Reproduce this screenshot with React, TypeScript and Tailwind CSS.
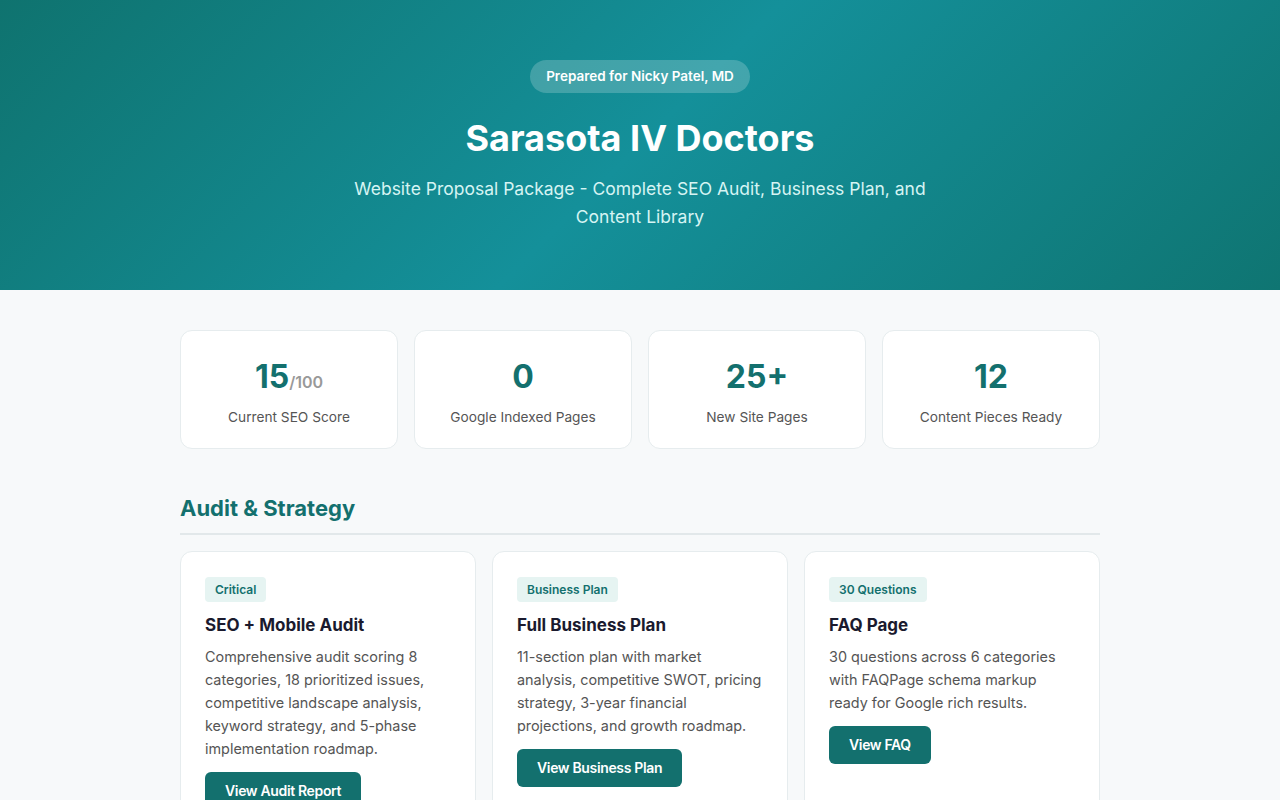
const stats = [
  { value: '15', suffix: '/100', label: 'Current SEO Score' },
  { value: '0', label: 'Google Indexed Pages' },
  { value: '25+', label: 'New Site Pages' },
  { value: '12', label: 'Content Pieces Ready' },
];

const cards = [
  {
    tag: 'Critical',
    title: 'SEO + Mobile Audit',
    body: 'Comprehensive audit scoring 8 categories, 18 prioritized issues, competitive landscape analysis, keyword strategy, and 5-phase implementation roadmap.',
    cta: 'View Audit Report',
  },
  {
    tag: 'Business Plan',
    title: 'Full Business Plan',
    body: '11-section plan with market analysis, competitive SWOT, pricing strategy, 3-year financial projections, and growth roadmap.',
    cta: 'View Business Plan',
  },
  {
    tag: '30 Questions',
    title: 'FAQ Page',
    body: '30 questions across 6 categories with FAQPage schema markup ready for Google rich results.',
    cta: 'View FAQ',
  },
];

export default function App() {
  return (
    <div className="min-h-screen bg-[#f7f9fa] font-['Inter',sans-serif]">
      {/* Hero */}
      <header className="h-[290px] bg-[linear-gradient(135deg,#0f736f_0%,#14909a_50%,#0f7572_100%)] px-6 pt-[60px] text-center">
        <span className="inline-block rounded-full bg-white/20 px-4 py-[8px] text-[13.5px] font-semibold leading-[17px] text-white">
          Prepared for Nicky Patel, MD
        </span>
        <h1 className="mt-[23px] text-[36px] font-bold leading-[44px] text-white">Sarasota IV Doctors</h1>
        <p className="mx-auto mt-[15px] max-w-[600px] text-[17.5px] leading-[28px] text-[#d6f4f3]">
          Website Proposal Package - Complete SEO Audit, Business Plan, and Content Library
        </p>
      </header>

      <main className="mx-auto w-[920px] pt-10">
        {/* Stats */}
        <div className="grid grid-cols-4 gap-4">
          {stats.map((s) => (
            <div
              key={s.label}
              className="rounded-xl border border-[#e6ecee] bg-white px-4 pt-[26px] pb-[21px] text-center"
            >
              <div className="h-10 text-[32px] font-bold leading-10 text-[#13706e]">
                {s.value}
                {s.suffix && <span className="text-[16px] font-semibold text-[#999999]">{s.suffix}</span>}
              </div>
              <div className="mt-[10px] text-[13.7px] leading-5 text-[#555555]">{s.label}</div>
            </div>
          ))}
        </div>

        {/* Audit & Strategy */}
        <h2 className="mt-[44px] border-b-2 border-[#e2e8ea] pb-[10px] text-[22px] font-bold leading-[30px] text-[#13706e]">
          Audit &amp; Strategy
        </h2>
        <div className="mt-4 grid grid-cols-3 gap-4">
          {cards.map((c) => (
            <div key={c.title} className="rounded-xl border border-[#e6ecee] bg-white px-6 pt-[24px] pb-6">
              <span className="inline-block rounded-[4px] bg-[#e6f4f2] px-[10px] py-[4px] text-[12px] font-semibold leading-[17px] text-[#13706e]">
                {c.tag}
              </span>
              <h3 className="mt-[12px] text-[17px] font-bold leading-[22px] text-[#1a1a2e]">{c.title}</h3>
              <p className="mt-[9px] text-[14.4px] leading-[23px] text-[#555555]">{c.body}</p>
              <button className="mt-[12px] rounded-[6px] bg-[#13706e] px-5 py-[10px] text-[14px] font-semibold leading-[18px] tracking-[-0.35px] text-white">
                {c.cta}
              </button>
            </div>
          ))}
        </div>
      </main>
    </div>
  );
}
